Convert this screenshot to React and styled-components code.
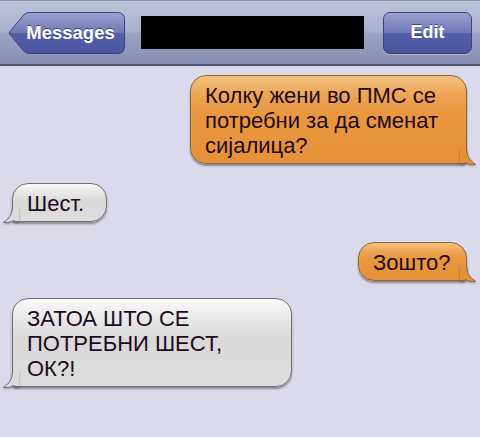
import React from "react";
import styled, { createGlobalStyle } from "styled-components";

const GlobalStyle = createGlobalStyle`
  html, body {
    margin: 0;
    padding: 0;
    background: #dbdaec;
  }
  body {
    font-family: "Liberation Sans", Arial, sans-serif;
  }
`;

const Screen = styled.div`
  width: 480px;
  height: 437px;
  overflow: hidden;
  background: #dbdaec;
  display: flex;
  flex-direction: column;
`;

const NavBar = styled.div`
  height: 66px;
  box-sizing: border-box;
  border-top: 1px solid #8d91a6;
  border-bottom: 2px solid #4d5169;
  background: linear-gradient(
    to bottom,
    #bdc3da 0%,
    #aab0cc 48%,
    #9ba2c3 52%,
    #878eb3 100%
  );
  display: flex;
  align-items: center;
  padding: 0 8px;
  gap: 16px;
`;

const BackButton = styled.div`
  position: relative;
  width: 117px;
  height: 42px;
  flex: none;
  display: flex;
  align-items: center;
  justify-content: center;
  padding-left: 8px;
  box-sizing: border-box;
`;

const BackShape = styled.svg`
  position: absolute;
  inset: 0;
`;

const ButtonLabel = styled.span`
  position: relative;
  color: #fff;
  font-weight: bold;
  font-size: ${(p) => p.$size || 18}px;
  text-shadow: 0 -1px 0 rgba(20, 25, 70, 0.6);
`;

const TitleMask = styled.div`
  width: 223px;
  height: 33px;
  background: #000;
  flex: none;
`;

const EditButton = styled.div`
  margin-left: 3px;
  width: 89px;
  height: 42px;
  flex: none;
  box-sizing: border-box;
  border: 1px solid #3c4170;
  border-radius: 7px;
  background: linear-gradient(
    to bottom,
    #9aa2cf 0%,
    #7079b6 49%,
    #545fa7 51%,
    #4a55a1 100%
  );
  box-shadow: 0 1px 0 rgba(255, 255, 255, 0.35);
  display: flex;
  align-items: center;
  justify-content: center;
`;

const Thread = styled.div`
  display: flex;
  flex-direction: column;
  padding: 9px 13px 0 12px;
`;

const Row = styled.div`
  display: flex;
  justify-content: ${(p) => (p.$mine ? "flex-end" : "flex-start")};
  margin-bottom: ${(p) => p.$gap}px;
`;

const palette = {
  orange: {
    border: "#8a6a2e",
    bg: "linear-gradient(to bottom, #f4c283 0%, #eea658 20%, #e9983f 42%, #e6913a 100%)",
    tail: "#e6913a",
  },
  gray: {
    border: "#707070",
    bg: "linear-gradient(to bottom, #fafafa 0%, #e8e8e8 22%, #d9d9d9 46%, #dddddd 100%)",
    tail: "#dcdcdc",
  },
};

const Bubble = styled.div`
  position: relative;
  box-sizing: border-box;
  width: ${(p) => p.$width}px;
  padding: 7px 12px 5px 14px;
  border: 1px solid ${(p) => palette[p.$tone].border};
  border-radius: 16px;
  ${(p) =>
    p.$mine
      ? "border-bottom-right-radius: 4px;"
      : "border-bottom-left-radius: 4px;"}
  background: ${(p) => palette[p.$tone].bg};
  box-shadow: 0 2px 2px rgba(40, 30, 40, 0.45);
  color: #1d0b1d;
  font-size: 22px;
  line-height: 25px;
  white-space: nowrap;
`;

const Tail = styled.svg`
  position: absolute;
  bottom: -2px;
  ${(p) =>
    p.$mine ? "right: -10px;" : "left: -10px; transform: scaleX(-1);"}
  filter: drop-shadow(0 1px 1px rgba(40, 30, 40, 0.4));
`;

// body edge sits at x=6.5, body bottom at y=14.5
const BubbleTail = ({ mine, tone }) => (
  <Tail $mine={mine} width="16" height="16" viewBox="0 0 16 16">
    <path
      d="M0 0 H7 C7 6 9 11.5 15.5 15.4 C11.5 15.8 8 15.2 5.5 13.6 C4 14.6 2 14.6 0 14.6 Z"
      fill={palette[tone].tail}
    />
    <path
      d="M6.5 0 C6.6 6 9 11.5 15.5 15.4 C11.5 15.8 8 15.2 5.5 13.6 C4 14.6 2 14.6 0 14.6"
      fill="none"
      stroke={palette[tone].border}
      strokeWidth="1"
    />
  </Tail>
);

const Message = ({ mine, tone, gap, width, lines }) => (
  <Row $mine={mine} $gap={gap}>
    <Bubble $mine={mine} $tone={tone} $width={width}>
      {lines.map((line, i) => (
        <React.Fragment key={i}>
          {i > 0 && <br />}
          {line}
        </React.Fragment>
      ))}
      <BubbleTail mine={mine} tone={tone} />
    </Bubble>
  </Row>
);

const messages = [
  {
    mine: true,
    tone: "orange",
    gap: 19,
    width: 277,
    lines: ["Колку жени во ПМС се", "потребни за да сменат", "сијалица?"],
  },
  { mine: false, tone: "gray", gap: 20, width: 95, lines: ["Шест."] },
  { mine: true, tone: "orange", gap: 17, width: 109, lines: ["Зошто?"] },
  {
    mine: false,
    tone: "gray",
    gap: 0,
    width: 280,
    lines: ["ЗАТОА ШТО СЕ", "ПОТРЕБНИ ШЕСТ,", "ОК?!"],
  },
];

const App = () => (
  <Screen>
    <GlobalStyle />
    <NavBar>
      <BackButton>
        <BackShape width="117" height="42" viewBox="0 0 117 42">
          <defs>
            <linearGradient id="backFill" x1="0" y1="0" x2="0" y2="1">
              <stop offset="0" stopColor="#9aa2cf" />
              <stop offset="0.49" stopColor="#7079b6" />
              <stop offset="0.51" stopColor="#545fa7" />
              <stop offset="1" stopColor="#4a55a1" />
            </linearGradient>
          </defs>
          <path
            d="M21 0.5 H109.5 Q116.5 0.5 116.5 7.5 V34.5 Q116.5 41.5 109.5 41.5 H21 Q18 41.5 16 39.3 L1.8 22.3 Q0.8 21 1.8 19.7 L16 2.7 Q18 0.5 21 0.5 Z"
            fill="url(#backFill)"
            stroke="#3c4170"
            strokeWidth="1"
          />
        </BackShape>
        <ButtonLabel $size={18.5}>Messages</ButtonLabel>
      </BackButton>
      <TitleMask />
      <EditButton>
        <ButtonLabel>Edit</ButtonLabel>
      </EditButton>
    </NavBar>
    <Thread>
      {messages.map((m, i) => (
        <Message key={i} {...m} />
      ))}
    </Thread>
  </Screen>
);

export default App;
